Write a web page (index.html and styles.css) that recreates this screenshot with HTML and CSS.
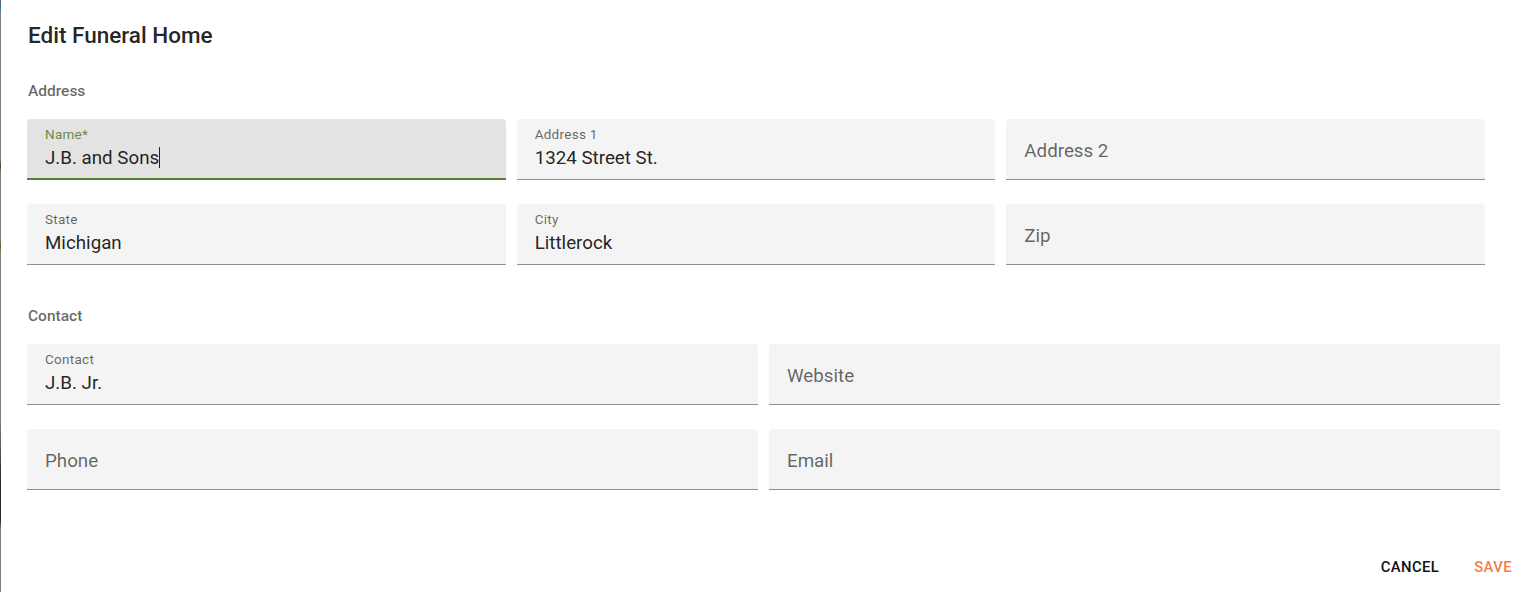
FILE: index.html
```html
<!DOCTYPE html>
<html lang="en">
<head>
<meta charset="utf-8">
<title>Edit Funeral Home</title>
<link rel="stylesheet" href="styles.css">
</head>
<body>
<div class="page">
  <div class="backdrop-strip"></div>
  <div class="dialog">
    <div class="content">
      <h2 class="title">Edit Funeral Home</h2>

      <div class="section-label">Address</div>
      <div class="grid grid-3">
        <div class="field focused">
          <span class="label">Name*</span>
          <span class="value">J.B. and Sons<span class="caret"></span></span>
        </div>
        <div class="field">
          <span class="label">Address 1</span>
          <span class="value">1324 Street St.</span>
        </div>
        <div class="field empty">
          <span class="placeholder">Address 2</span>
        </div>
        <div class="field">
          <span class="label">State</span>
          <span class="value">Michigan</span>
        </div>
        <div class="field">
          <span class="label">City</span>
          <span class="value">Littlerock</span>
        </div>
        <div class="field empty">
          <span class="placeholder">Zip</span>
        </div>
      </div>

      <div class="section-label contact-label">Contact</div>
      <div class="grid grid-2">
        <div class="field">
          <span class="label">Contact</span>
          <span class="value">J.B. Jr.</span>
        </div>
        <div class="field empty">
          <span class="placeholder">Website</span>
        </div>
        <div class="field empty">
          <span class="placeholder">Phone</span>
        </div>
        <div class="field empty">
          <span class="placeholder">Email</span>
        </div>
      </div>
    </div>

    <div class="actions">
      <button class="btn btn-cancel" type="button">Cancel</button>
      <button class="btn btn-save" type="button">Save</button>
    </div>
  </div>
</div>
</body>
</html>
```

FILE: styles.css
```css
* {
  box-sizing: border-box;
}

html, body {
  margin: 0;
  padding: 0;
  background: #ffffff;
}

body {
  font-family: Roboto, "Liberation Sans", Arial, sans-serif;
  color: rgba(0, 0, 0, 0.87);
  width: 1526px;
  height: 592px;
  overflow: hidden;
}

.page {
  display: flex;
  height: 592px;
}

.backdrop-strip {
  width: 1px;
  flex: 0 0 1px;
  background: linear-gradient(to bottom, #6b6b6b 0, #2a6f8f 6px, #7d7d7d 12px, #7d7d7d 160px, #5a3a20 166px, #808080 172px, #808080 240px, #4b6b2a 246px, #808080 252px, #808080 420px, #2a2a2a 480px, #2a2a2a 520px, #808080 530px);
}

.dialog {
  flex: 1;
  display: flex;
  flex-direction: column;
  background: #ffffff;
}

.content {
  padding: 19px 26px 0 26px;
}

.title {
  margin: 0 0 0 1px;
  font-size: 22.5px;
  line-height: 32px;
  font-weight: 500;
  color: rgba(0, 0, 0, 0.87);
}

.section-label {
  margin-top: 30px;
  margin-bottom: 18px;
  margin-left: 1px;
  font-size: 15.5px;
  line-height: 20px;
  font-weight: 500;
  color: rgba(0, 0, 0, 0.6);
}

.contact-label {
  margin-top: 41px;
}

.grid {
  display: grid;
  column-gap: 11px;
  row-gap: 24px;
}

.grid-3 {
  grid-template-columns: repeat(3, 1fr);
  margin-right: 15px;
}

.grid-2 {
  grid-template-columns: repeat(2, 1fr);
}

.field {
  height: 61px;
  display: flex;
  flex-direction: column;
  padding: 7px 18px 0 18px;
  background: #f4f4f4;
  border-radius: 4px 4px 0 0;
  border-bottom: 1px solid #8f8f8f;
}

.field.focused {
  background: #e3e3e3;
  border-bottom: 2px solid #5d7c3a;
}

.label {
  font-size: 13.5px;
  line-height: 16px;
  color: rgba(0, 0, 0, 0.6);
  letter-spacing: 0.02em;
}

.focused .label {
  color: #6b8a4a;
}

.value {
  margin-top: 4px;
  font-size: 18.75px;
  line-height: 24px;
  color: rgba(0, 0, 0, 0.87);
  white-space: nowrap;
}

.caret {
  display: inline-block;
  width: 1px;
  height: 21px;
  background: #222222;
  vertical-align: -4px;
}

.field.empty {
  padding-top: 20px;
}

.placeholder {
  font-size: 18.75px;
  line-height: 24px;
  color: rgba(0, 0, 0, 0.6);
}

.actions {
  margin-top: auto;
  display: flex;
  justify-content: flex-end;
  gap: 19px;
  padding: 0 6px 7px 0;
}

.btn {
  font-family: Roboto, "Liberation Sans", Arial, sans-serif;
  background: transparent;
  border: none;
  padding: 6px 8px;
  font-size: 14.8px;
  line-height: 24px;
  font-weight: 500;
  letter-spacing: 0.02857em;
  text-transform: uppercase;
  cursor: pointer;
}

.btn-cancel {
  color: #111111;
}

.btn-save {
  color: #f47b4c;
}
```
